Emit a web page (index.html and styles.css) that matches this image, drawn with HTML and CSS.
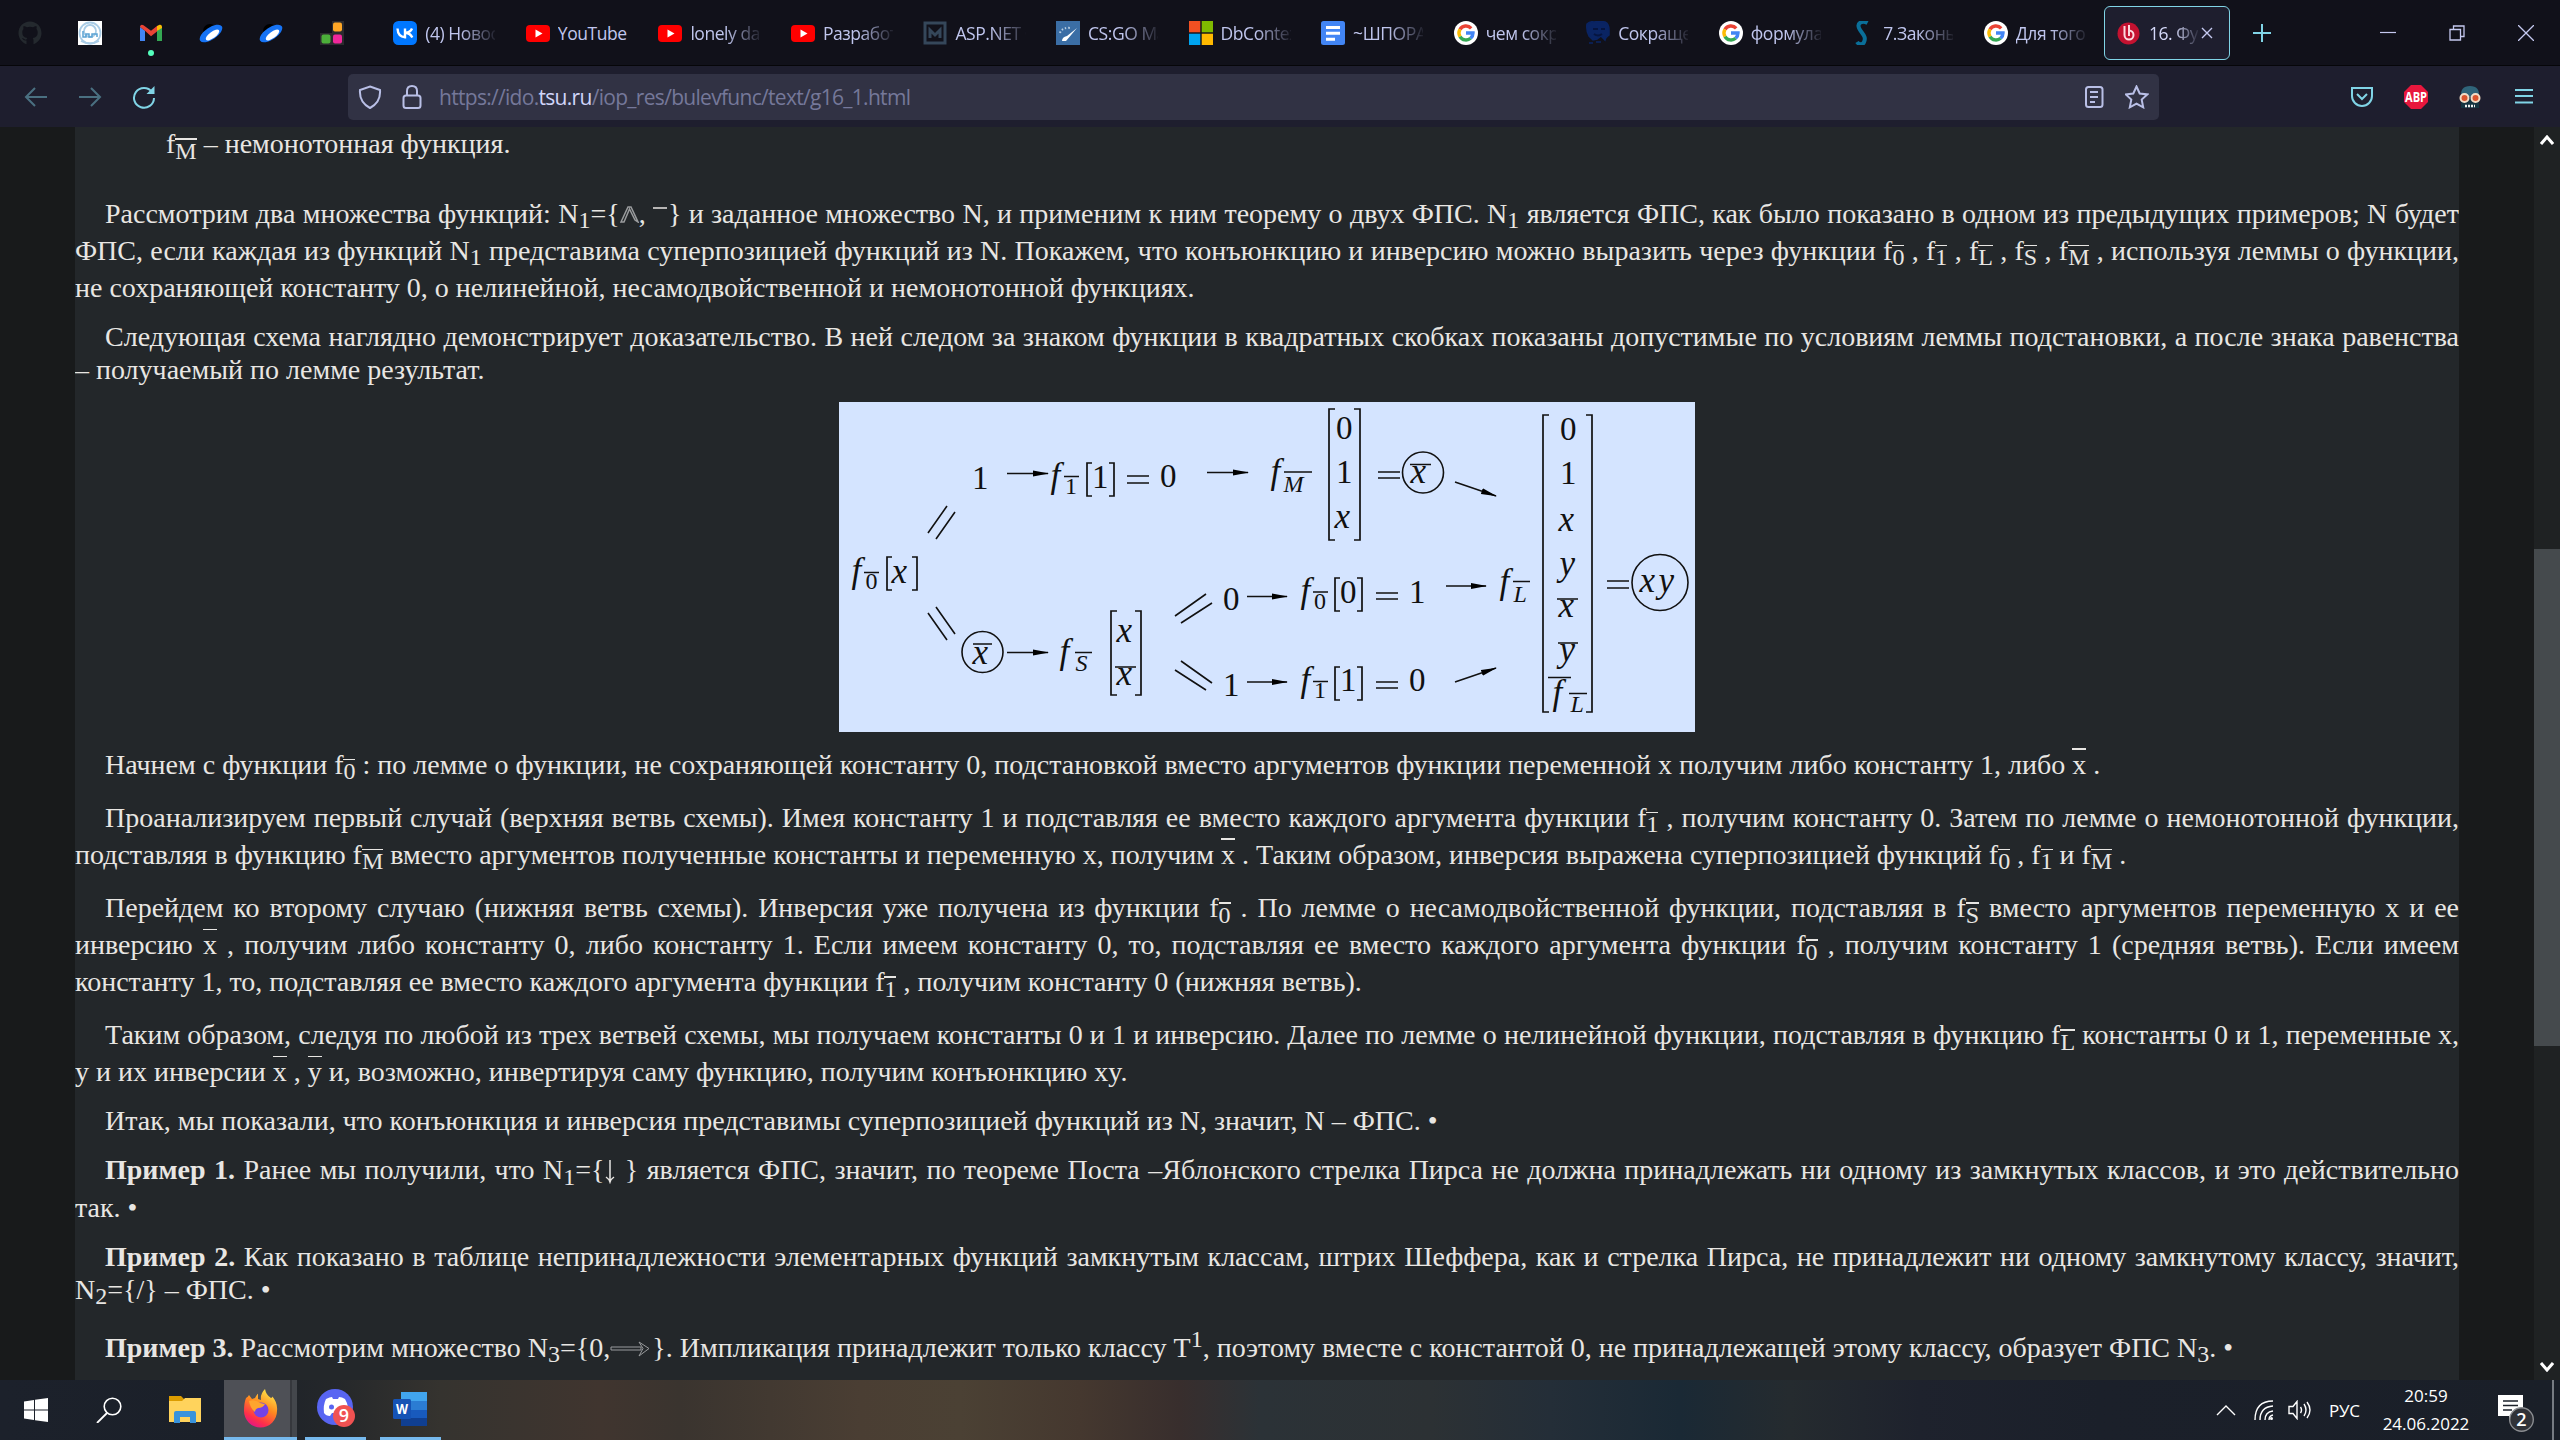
FILE: index.html
```html
<!DOCTYPE html>
<html lang="ru">
<head>
<meta charset="utf-8">
<title>16. Функционально полные системы</title>
<link rel="stylesheet" href="styles.css">
</head>
<body>
<svg class="defs" width="0" height="0">
  <symbol id="yt" viewBox="0 0 24 24"><rect y="4" width="24" height="17" rx="4" fill="#f00"/><path d="M9.5 8.5v8l7-4z" fill="#fff"/></symbol>
  <symbol id="google" viewBox="0 0 24 24"><circle cx="12" cy="12" r="12" fill="#fff"/><g fill="none" stroke-width="3.4"><path d="M17.2 7.3A7 7 0 0 0 6 8.4" stroke="#ea4335"/><path d="M6 8.4a7 7 0 0 0 0 7.2" stroke="#fbbc05"/><path d="M6 15.6a7 7 0 0 0 10.6 1.7" stroke="#34a853"/><path d="M16.6 17.3A7 7 0 0 0 19 12H12" stroke="#4285f4"/></g></symbol>
  <symbol id="saucer" viewBox="0 0 24 24"><circle cx="11" cy="10" r="7" fill="#000"/><ellipse cx="12" cy="12.5" rx="13" ry="6" transform="rotate(-34 12 12.5)" fill="#1673f5"/><ellipse cx="13.5" cy="14" rx="8" ry="3.2" transform="rotate(-36 13.5 14)" fill="#fff"/></symbol>
</svg>

<header class="tabs">
  <div class="pin"><svg viewBox="0 0 24 24"><path d="M12 .5C5.500.5.5 5.600.5 12c0 5.200 3.300 9.600 8 11.200V19.500c-3 .6-3.900-1.500-4.500-2.400 2 .2 2 2 4.500 1.500.1-.8.400-1.300.8-1.700-3.500-.4-5-2.200-5-5.500 0-1.300.4-2.500 1.200-3.300-.3-1-.2-2 .1-3 1.400.1 2.400.6 3.300 1.200a11.500 11.500 0 0 1 6.200 0c.9-.6 1.900-1.100 3.300-1.200.3 1 .4 2 .1 3 .8.800 1.200 2 1.200 3.300 0 3.300-1.500 5.100-5 5.500.5.500.8 1.300.8 2.500v3.800c4.700-1.600 8-6 8-11.200C23.500 5.600 18.500.5 12 .5z" fill="#24292e"/></svg></div>
  <div class="pin"><svg viewBox="0 0 24 24"><path d="M0 0h24v24H0z" fill="#fff"/><g fill="none" stroke="#a9cce6" stroke-width="1.800"><circle cx="12" cy="12" r="10.500"/><circle cx="12" cy="10" r="6"/><path d="M3 20q9 5 18 0" /></g><path d="M5 10v6h3v-3h3v3h3v-3h5v3" fill="none" stroke="#5ba3d4" stroke-width="1.500"/></svg></div>
  <div class="pin unread"><svg viewBox="0 0 24 24"><path d="M1 20V6l5 3.800V20z" fill="#4285f4"/><path d="M18 20V9.800L23 6v14z" fill="#34a853"/><path d="M18 10V5l2-1c2-1 3 .5 3 2v1z" fill="#fbbc04"/><path d="M6 9.800 1 6c0-2 1.700-3 3.500-1.800L12 9.800 18 5v5.500l-6 4.800z" fill="#ea4335"/></svg></div>
  <div class="pin"><svg viewBox="0 0 24 24"><use href="#saucer"/></svg></div>
  <div class="pin"><svg viewBox="0 0 24 24"><use href="#saucer"/></svg></div>
  <div class="pin"><svg viewBox="0 0 24 24"><path d="M12 0h12v24H0V12h12z" fill="#2b2b2e"/><rect x="13" y="1.500" width="9" height="9" rx="2" fill="#ffa726"/><rect x="1.500" y="13.500" width="9" height="9" rx="2" fill="#4caf3a"/><rect x="13" y="13.500" width="9" height="9" rx="2" fill="#f0279b"/></svg></div>
  <div class="tab first"><svg viewBox="0 0 24 24"><rect width="24" height="24" rx="5.500" fill="#07f"/><path d="M4.500 7.500c.3 5.500 3 8.500 7.500 8.700V7.500M19 7.500c-1 2.500-3.500 4-6.500 4.300 3 .3 5.500 2 6.800 4.700" fill="none" stroke="#fff" stroke-width="2.400"/></svg><span>(4) Новости</span></div>
  <div class="tab"><svg viewBox="0 0 24 24"><use href="#yt"/></svg><span>YouTube</span></div>
  <div class="tab"><svg viewBox="0 0 24 24"><use href="#yt"/></svg><span>lonely day</span></div>
  <div class="tab"><svg viewBox="0 0 24 24"><use href="#yt"/></svg><span>Разработка</span></div>
  <div class="tab"><svg viewBox="0 0 24 24"><path d="M2 2h20v20H2zM7 17V9l5 5 5-5v8" fill="none" stroke="#35475a" stroke-width="3"/></svg><span>ASP.NET C</span></div>
  <div class="tab"><svg viewBox="0 0 24 24"><path d="M0 0h24v24H0z" fill="#3b6ea5"/><path d="M21 7 10 20H6q0-4 5-5z" fill="#fff"/><path d="M4 12q2-6 11-5" fill="none" stroke="#b8cde2" stroke-dasharray="1.500 2" stroke-width="2"/></svg><span>CS:GO Ma</span></div>
  <div class="tab"><svg viewBox="0 0 24 24"><path d="M0 0h11.300v11.300H0z" fill="#f25022"/><path d="M12.700 0H24v11.300H12.700z" fill="#7fba00"/><path d="M0 12.700h11.300V24H0z" fill="#00a4ef"/><path d="M12.700 12.700H24V24H12.700z" fill="#ffb900"/></svg><span>DbContext</span></div>
  <div class="tab"><svg viewBox="0 0 24 24"><rect width="24" height="24" rx="2.500" fill="#4285f4"/><path d="M5 6.500h14M5 12.300h14M5 18.200h9" stroke="#fff" stroke-width="3"/></svg><span>~ШПОРА</span></div>
  <div class="tab"><svg viewBox="0 0 24 24"><use href="#google"/></svg><span>чем сокра</span></div>
  <div class="tab"><svg viewBox="0 0 24 24"><path d="M1 3q3-3 7-2 6-1 11 0 4 2 4 8v5q-3 2-4 5l-4-4-4 3-4 1-4-4Q0 9 1 3zM3 22h4M10 21h5" fill="#0a2463" stroke="#0a2463" stroke-width="1.500"/><path d="M7 8h5m3 0h4M8 13q4 3 8 0" stroke="#061540" fill="none" stroke-width="2"/></svg><span>Сокращен</span></div>
  <div class="tab"><svg viewBox="0 0 24 24"><use href="#google"/></svg><span>формула</span></div>
  <div class="tab"><svg viewBox="0 0 24 24"><path d="M16.500 2C11-1 6 2 8 7s8 8 5 14c-1 3-5 3-7 0" fill="none" stroke="#0a6f99" stroke-width="4"/></svg><span>7.Законы</span></div>
  <div class="tab"><svg viewBox="0 0 24 24"><use href="#google"/></svg><span>Для того ч</span></div>
  <div class="tab active"><svg viewBox="0 0 24 24"><circle cx="11.500" cy="12.500" r="11" fill="#c41230"/><path d="M7.500 5v9a4.500 4.500 0 1 0 4.500-4.500M12 4v11" fill="none" stroke="#fbd9de" stroke-width="2"/></svg><span>16. Функ</span><svg class="x" viewBox="0 0 12 12"><path d="m1 1 10 10M11 1 1 11" stroke="#c5c9f0" stroke-width="1.400"/></svg></div>
  <svg class="plus" viewBox="0 0 18 18"><path d="M9 0v18M0 9h18" stroke="#80d4e6" stroke-width="2"/></svg>
  <div class="win">
    <svg viewBox="0 0 16 16"><path d="M0 7.500h16" stroke="#c5c9f0" stroke-width="1.200"/></svg>
    <svg viewBox="0 0 16 16"><path d="M1 4.500h10.500V15H1zM4.500 4.500V1H15v10.500h-3.500" fill="none" stroke="#c5c9f0" stroke-width="1.300"/></svg>
    <svg viewBox="0 0 16 16"><path d="m0 0 16 16M16 0 0 16" stroke="#c5c9f0" stroke-width="1.300"/></svg>
  </div>
</header>

<nav class="bar">
  <div class="hist">
    <svg class="dim" viewBox="0 0 24 24"><path d="M23 12H2M11 3l-9 9 9 9"/></svg>
    <svg class="dim" viewBox="0 0 24 24"><path d="M1 12h21M13 3l9 9-9 9"/></svg>
    <svg viewBox="0 0 24 24"><path d="M20 7a10 9.800 0 1 0 2 6"/><path d="M22.500 1v8h-8z" fill="#80d4e6" stroke="none"/></svg>
  </div>
  <div class="url">
    <svg viewBox="0 0 24 24"><path d="M12 1.500 22 5q1 12-10 18Q1 17 2 5z"/></svg>
    <svg viewBox="0 0 24 24"><rect x="3.500" y="10.500" width="17" height="12.500" rx="2.500"/><path d="M7 10V6q0-5 5-5t5 5v4"/></svg>
    <span class="addr">https://ido.<b>tsu.ru</b>/iop_res/bulevfunc/text/g16_1.html</span>
    <svg viewBox="0 0 24 24"><rect x="3" y="2" width="16.500" height="20" rx="2.500"/><path d="M7 7h8M7 12h8M7 17h5"/></svg>
    <svg viewBox="0 0 24 24"><path d="m11.500 1.500 3.200 7 7.600.9-5.600 5.200 1.500 7.700-6.700-3.700-6.700 3.700 1.500-7.700L.7 9.400l7.600-.9z"/></svg>
  </div>
  <div class="ext">
    <svg viewBox="0 0 24 24"><path d="M2 3h20v8a10 10 0 0 1-20 0zM7 9l5 5 5-5" fill="none" stroke="#80d4e6" stroke-width="2"/></svg>
    <svg viewBox="0 0 24 24"><path d="M7 0h10l7 7v10l-7 7H7l-7-7V7z" fill="#e8173d"/><text x="12" y="17" text-anchor="middle" textLength="22" lengthAdjust="spacingAndGlyphs">ABP</text></svg>
    <svg viewBox="0 0 24 24"><path d="M3 12Q2 1 12 1t9 11z" fill="#2f6479"/><path d="M3 14h18v9H3z" fill="#153441"/><circle cx="6.500" cy="13" r="4" fill="#d9552f" stroke="#f2dcc6" stroke-width="2"/><circle cx="17.500" cy="13" r="4" fill="#d9552f" stroke="#f2dcc6" stroke-width="2"/><path d="M7 21h10" stroke="#eee" stroke-width="2.500" stroke-dasharray="2 1"/></svg>
    <svg viewBox="0 0 24 24"><path d="M3 5h18M3 11h18M3 17.500h18" stroke="#80d4e6" stroke-width="2"/></svg>
  </div>
</nav>

<main class="view">
  <article class="doc">
    <p class="def"><span class="t">f<sub class="o">M</sub> – немонотонная функция.</span></p>
    <p><span class="t j i">Рассмотрим два множества функций: N<sub>1</sub>={<svg class="and" viewBox="0 0 19 17"><path d="M1 16 8 1h3l7 15-3-2-5.500-11L4 16z"/></svg>, <svg class="not" viewBox="0 0 15 17"><path d="M0 2h14"/></svg>} и заданное множество N, и применим к ним теорему о двух ФПС. N<sub>1</sub> является ФПС, как было показано в одном из предыдущих примеров; N будет</span>
    <span class="t j">ФПС, если каждая из функций N<sub>1</sub> представима суперпозицией функций из N. Покажем, что конъюнкцию и инверсию можно выразить через функции f<sub class="o">0</sub> , f<sub class="o">1</sub> , f<sub class="o">L</sub> , f<sub class="o">S</sub> , f<sub class="o">M</sub> , используя леммы о функции,</span>
    <span>не сохраняющей константу 0, о нелинейной, несамодвойственной и немонотонной функциях.</span></p>
    <p><span class="j i">Следующая схема наглядно демонстрирует доказательство. В ней следом за знаком функции в квадратных скобках показаны допустимые по условиям леммы подстановки, а после знака равенства</span>
    <span>– получаемый по лемме результат.</span></p>

    <svg class="scheme" viewBox="0 0 856 330">
      <defs><marker id="a" markerWidth="17" markerHeight="7" refX="15" refY="3.500" orient="auto" markerUnits="userSpaceOnUse"><path d="M0 .5 16 3.500 0 6.500z"/></marker></defs>
      <g class="ln">
        <path d="m89 131 19-27M97 137l19-27M89 211l19 27M97 205l19 27M336 214l31-22M342 221l31-20M336 268l31 20M342 259l31 22"/>
        <g marker-end="url(#a)">
          <path d="M168 71.500h41"/><path d="M368 70.500h41"/><path d="M168 250.500h41"/><path d="M408 194.500h40"/><path d="M408 280h40"/><path d="M607 184h40"/><path d="m616 80 41 14"/><path d="m616 280 41-14"/>
        </g>
        <circle cx="143.500" cy="250" r="20.500"/><circle cx="584" cy="70.500" r="20.500"/><circle cx="821" cy="180.500" r="28"/>
      </g>
      <g class="br">
        <path d="M53 155h-5v33h5M73 155h5v33h-5M253 61h-5v33h5M270 61h5v33h-5M278 209h-6v84h6M296 209h6v84h-6M496 7h-6v131h6M515 7h6v131h-6M501 176h-5v33h5M518 176h5v33h-5M501 265h-5v33h5M518 265h5v33h-5M710 13h-6v297h6M747 13h6v297h-6"/>
        <path d="M25 170.500h15M225 74.500h15M236 250.500h17M134 242h19M276 265h21M445 70h28M571 62.500h21M474 190h15M474 279.500h15M674 179.500h17M718 197h21M719 241h20M709 275.500h23M730 291.500h18"/>
        <path d="M288 74h22M288 81h22M539 70h22M539 76h22M537 191h22M537 197h22M537 280h22M537 286h22M768 179h22M768 186h22"/>
      </g>
      <g class="it" transform="translate(-1.500 1)">
        <text x="14" y="179">f</text><text x="54" y="180">x</text><text x="213" y="84">f</text><text x="135" y="261">x</text><text x="222" y="260">f</text><text x="279" y="239">x</text><text x="279" y="282">x</text>
        <text x="433" y="80">f</text><text x="497" y="125">x</text><text x="573" y="80">x</text><text x="463" y="199">f</text><text x="463" y="288">f</text><text x="662" y="190">f</text>
        <text x="721" y="128">x</text><text x="722" y="172">y</text><text x="721" y="214">x</text><text x="722" y="258">y</text><text x="715" y="301">f</text><text x="802" y="189">x</text><text x="821" y="189">y</text>
        <g class="s"><text x="238" y="268">S</text><text x="446" y="89">M</text><text x="676" y="199">L</text><text x="733" y="309">L</text></g>
      </g>
      <g class="up">
        <text x="133" y="87">1</text><text x="253" y="86">1</text><text x="321" y="85">0</text><text x="384" y="208">0</text><text x="384" y="294">1</text>
        <text x="497" y="37">0</text><text x="497" y="81">1</text><text x="501" y="201">0</text><text x="570" y="201">1</text><text x="501" y="289">1</text><text x="570" y="289">0</text><text x="721" y="38">0</text><text x="721" y="82">1</text>
        <g class="s"><text x="26.500" y="187">0</text><text x="226" y="92">1</text><text x="475" y="207">0</text><text x="475" y="296">1</text></g>
      </g>
    </svg>

    <p><span class="t i">Начнем с функции f<sub class="o">0</sub> : по лемме о функции, не сохраняющей константу 0, подстановкой вместо аргументов функции переменной x получим либо константу 1, либо <i class="o">x</i> .</span></p>
    <p><span class="t j i">Проанализируем первый случай (верхняя ветвь схемы). Имея константу 1 и подставляя ее вместо каждого аргумента функции f<sub class="o">1</sub> , получим константу 0. Затем по лемме о немонотонной функции,</span>
    <span class="t">подставляя в функцию f<sub class="o">M</sub> вместо аргументов полученные константы и переменную x, получим <i class="o">x</i> . Таким образом, инверсия выражена суперпозицией функций f<sub class="o">0</sub> , f<sub class="o">1</sub> и f<sub class="o">M</sub> .</span></p>
    <p><span class="t j i">Перейдем ко второму случаю (нижняя ветвь схемы). Инверсия уже получена из функции f<sub class="o">0</sub> . По лемме о несамодвойственной функции, подставляя в f<sub class="o">S</sub> вместо аргументов переменную x и ее</span>
    <span class="t j">инверсию <i class="o">x</i> , получим либо константу 0, либо константу 1. Если имеем константу 0, то, подставляя ее вместо каждого аргумента функции f<sub class="o">0</sub> , получим константу 1 (средняя ветвь). Если имеем</span>
    <span class="t">константу 1, то, подставляя ее вместо каждого аргумента функции f<sub class="o">1</sub> , получим константу 0 (нижняя ветвь).</span></p>
    <p><span class="t j i">Таким образом, следуя по любой из трех ветвей схемы, мы получаем константы 0 и 1 и инверсию. Далее по лемме о нелинейной функции, подставляя в функцию f<sub class="o">L</sub> константы 0 и 1, переменные x,</span>
    <span>y и их инверсии <i class="o">x</i> , <i class="o">y</i> и, возможно, инвертируя саму функцию, получим конъюнкцию xy.</span></p>
    <p><span class="i">Итак, мы показали, что конъюнкция и инверсия представимы суперпозицией функций из N, значит, N – ФПС. •</span></p>
    <p><span class="t j i"><b>Пример 1.</b> Ранее мы получили, что N<sub>1</sub>={<svg class="down" viewBox="0 0 12 24"><path d="M6 0v21M2 17q3 2 4 5 1-3 4-5"/></svg> } является ФПС, значит, по теореме Поста –Яблонского стрелка Пирса не должна принадлежать ни одному из замкнутых классов, и это действительно</span>
    <span>так. •</span></p>
    <p><span class="j i"><b>Пример 2.</b> Как показано в таблице непринадлежности элементарных функций замкнутым классам, штрих Шеффера, как и стрелка Пирса, не принадлежит ни одному замкнутому классу, значит,</span>
    <span class="t">N<sub>2</sub>={/} – ФПС. •</span></p>
    <p class="last"><span class="t i"><b>Пример 3.</b> Рассмотрим множество N<sub>3</sub>={0,<svg class="imp" viewBox="0 0 42 16"><path d="M1 6h30v3H1z"/><path d="m29 1 10 6.500L29 15l4-7.500z"/></svg>}. Импликация принадлежит только классу T<sup>1</sup>, поэтому вместе с константой 0, не принадлежащей этому классу, образует ФПС N<sub>3</sub>. •</span></p>
  </article>
  <div class="scroll"><svg viewBox="0 0 14 10"><path d="m1 9 6-7 6 7"/></svg><div class="thumb"></div><svg viewBox="0 0 14 10"><path d="m1 1 6 7 6-7"/></svg></div>
</main>

<footer class="task">
  <div class="cell start"><svg width="24" height="24" viewBox="0 0 24 24"><path d="M0 3.500 10 2v9.500H0zM11 1.800 24 0v11.500H11zM0 12.500h10V22L0 20.500zM11 12.500h13V24l-13-1.800z" fill="#fff"/></svg></div>
  <div class="cell find"><svg width="26" height="26" viewBox="0 0 26 26"><circle cx="16.500" cy="9.500" r="8.300" fill="none" stroke="#fff" stroke-width="1.600"/><path d="M11 16 1 26" stroke="#fff" stroke-width="1.800"/></svg></div>
  <div class="cell"><svg width="32" height="28" viewBox="0 0 32 28"><path d="M0 0h12l3 3v4H0z" fill="#dc9c00"/><path d="M0 5h13l3-3h16v24H0z" fill="#ffd35c"/><path d="M5 27V17q0-2 2-2h18q2 0 2 2v10h-6v-6H11v6z" fill="#3a93dc"/></svg></div>
  <div class="cell run ff"><svg width="36" height="40" viewBox="0 0 36 40"><defs><linearGradient id="f" x1=".8" y1="0" x2=".3" y2="1"><stop offset="0" stop-color="#fff14f"/><stop offset=".45" stop-color="#ff8a1f"/><stop offset=".8" stop-color="#ff2f4a"/><stop offset="1" stop-color="#e31587"/></linearGradient></defs><path d="M3 9q2-1 3-3l3 4 3-1q3-5 3-4v5l3 1q-1-6 4-11 1 6 6 9 2-1 1-2 6 7 5 15a16.500 16.500 0 0 1-33 0Q1 14 3 9z" fill="url(#f)"/><circle cx="18" cy="21" r="7.500" fill="#7542e5"/><path d="M6 12q6-2 11 2l5 1q-2 4-7 4-3 1-3 4-5-4-6-11z" fill="#ffa52e"/></svg></div>
  <div class="cell run dc"><svg width="38" height="44" viewBox="0 0 38 44"><circle cx="18" cy="20" r="18" fill="#5865f2"/><path d="M9 12q4-2 6-2l1 2h5l1-2q3 0 6 2 4 7 3 14-3 3-6 3l-2-3h-8l-2 3q-4 0-6-3-1-8 2-14z" fill="#fff"/><circle cx="14.500" cy="20" r="2.500" fill="#5865f2"/><circle cx="27" cy="29" r="11" fill="#f05252"/><text x="27" y="35" text-anchor="middle">9</text></svg></div>
  <div class="cell run wd"><svg width="36" height="38" viewBox="0 0 36 38"><path d="M8 2h26v10H8z" fill="#41a5ee"/><path d="M8 11h26v9H8z" fill="#2b7cd3"/><path d="M8 20h26v8H8z" fill="#185abd"/><path d="M8 28h26v8H8z" fill="#103f91"/><rect y="9" width="18" height="20" rx="1.500" fill="#1553b5"/><text x="9" y="24" text-anchor="middle" textLength="12" lengthAdjust="spacingAndGlyphs">W</text></svg></div>
  <div class="tray">
    <svg width="20" height="12" viewBox="0 0 20 12"><path d="m1 11 9-9 9 9"/></svg>
    <svg class="wifi" width="20" height="22" viewBox="0 0 20 22"><path d="M1 21Q1 2 19 2M6 21Q6 8 19 7M11 21q0-8 8-9M15 21q0-4 4-5"/><circle cx="17.500" cy="19.500" r="1.500" fill="#fff" stroke="none"/></svg>
    <svg width="23" height="20" viewBox="0 0 23 20"><path d="M1 6.500h4l4-5v17l-4-5H1zM12.500 7q2 3 0 6M16 4q4 6 0 12M19 2q6 8 0 16"/></svg>
    <span class="lang">РУС</span>
    <div class="clock"><span>20:59</span><span>24.06.2022</span></div>
    <svg class="note" width="38" height="38" viewBox="0 0 38 38"><path d="M1 1h25v21H16l-4 5v-5H1z" fill="#fff"/><path d="M6 7h15M6 11.500h15M6 16h9" stroke="#1d222b" stroke-width="1.500"/><circle cx="24.500" cy="25.500" r="11.800" fill="#303238" stroke="#8b8d91"/><text x="24.500" y="32" text-anchor="middle">2</text></svg>
  </div>
</footer>
</body>
</html>
```
FILE: styles.css
```css
* { box-sizing: border-box; }
body {
  margin: 0;
  width: 2560px;
  height: 1440px;
  overflow: hidden;
  display: flex;
  flex-direction: column;
  background: #11111b;
  font-family: "Open Sans", "Noto Sans", sans-serif;
}
.defs { position: absolute; }

/* Tab strip */
.tabs {
  height: 66px;
  flex: none;
  display: flex;
  align-items: center;
  background: #11111a;
  border-bottom: 1px solid #060609;
  color: #c0c6ee;
  font-size: 17.5px;
}
.pin { width: 60.3px; display: flex; justify-content: center; position: relative; }
.pin svg, .tab svg { width: 24px; height: 24px; flex: none; }
.unread::after {
  content: "";
  position: absolute;
  left: 27px;
  top: 29px;
  width: 6px;
  height: 6px;
  border-radius: 50%;
  background: #54ffbd;
}
.tab {
  width: 132.55px;
  height: 54px;
  flex: none;
  padding: 0 18px 0 12.5px;
  display: flex;
  align-items: center;
  gap: 8px;
}
.tab.first { margin-left: 19px; }
.tab span {
  flex: 1;
  min-width: 0;
  overflow: hidden;
  white-space: nowrap;
  letter-spacing: -.45px;
  mask-image: linear-gradient(90deg, #000 50%, transparent 105%);
}
.tab:nth-child(8) span { mask-image: none; }
.tab.active {
  width: 126px;
  padding: 0 16px 0 12px;
  border: 1.500px solid #80d4e6;
  border-radius: 6px;
  background: #1e1e2e;
  color: #d5d9fa;
}
.tab.active span { margin-right: -5px; }
.tab.active .x { width: 12px; height: 14px; }
.plus { width: 18px; height: 18px; margin-left: 23px; }
.win { margin-left: auto; padding-right: 26px; display: flex; gap: 53px; }
.win svg { width: 16px; height: 16px; }

/* Toolbar */
.bar {
  height: 61px;
  flex: none;
  display: flex;
  align-items: center;
  background: #1e1e2e;
}
.hist { width: 348px; padding-left: 24px; display: flex; gap: 30px; }
.hist svg { width: 24px; height: 24px; fill: none; stroke: #80d4e6; stroke-width: 2; }
.hist .dim { opacity: .45; }
.url {
  width: 1811px;
  height: 46px;
  padding: 0 10px;
  display: flex;
  align-items: center;
  gap: 18px;
  border-radius: 5px;
  background: #313244;
}
.url svg { width: 24px; height: 24px; fill: none; stroke: #b9bfe6; stroke-width: 2; }
.addr { flex: 1; margin-left: -3px; color: #75789a; font-size: 21px; letter-spacing: -.7px; }
.addr b { font-weight: 400; color: #d0d5fa; }
.ext { flex: 1; padding-right: 24px; display: flex; justify-content: flex-end; gap: 30px; }
.ext svg { width: 24px; height: 24px; }
.ext text { fill: #fff; font: bold 14px "Open Sans", sans-serif; }

/* Page */
.view { flex: 1; min-height: 0; display: flex; background: #181a1b; }
.doc {
  width: 2384px;
  margin-left: 75px;
  overflow: hidden;
  background: #23272a;
  color: #e8e6e3;
  font: 28px/33px "Liberation Serif", "Times New Roman", serif;
}
.doc p { margin: 0 0 16px; }
.doc p > span { display: block; height: 33px; white-space: nowrap; }
.doc p > .t { height: 37.1px; }
.doc .j { text-align-last: justify; }
.doc .i { padding-left: 30px; }
.doc p.def { margin: 0 0 32.500px 91px; }
.doc p.last { margin-top: 21px; }
.doc sub, .doc sup { font-size: 24px; line-height: 0; vertical-align: baseline; position: relative; }
.doc sub { top: 5.500px; }
.doc sup { top: -10px; }
.doc i { font-style: normal; position: relative; }
.o::before {
  content: "";
  position: absolute;
  left: 0;
  right: 0;
  bottom: 24px;
  height: 1.500px;
  background: #e8e6e3;
}
i.o::before { bottom: 30px; }
.and, .not, .down, .imp { fill: none; stroke: #e8e6e3; stroke-width: 1.500; }
.and { width: 19px; height: 17px; stroke: #9a9c9e; }
.not { width: 15px; height: 17px; }
.down { width: 12px; height: 24px; vertical-align: -5px; }
.imp { width: 42px; height: 16px; stroke: #9a9c9e; stroke-width: 1; }

/* Substitution scheme */
.scheme { display: block; width: 856px; height: 330px; margin: 7px 0 16px 764px; background: #d4e4ff; }
.ln { fill: none; stroke: #111; stroke-width: 1.600; }
.br { fill: none; stroke: #111; stroke-width: 1.700; }
.it, .up { fill: #111; font-size: 35px; }
.up { font-size: 33px; }
.it { font-style: italic; }
.scheme .s { font-size: 24px; }

.scroll {
  width: 26px;
  margin-left: auto;
  padding: 8px 0;
  display: flex;
  flex-direction: column;
  align-items: center;
  background: #1f2223;
}
.scroll svg { width: 14px; height: 10px; flex: none; fill: none; stroke: #fff; stroke-width: 3; }
.thumb { width: 26px; height: 497px; margin: 404px 0 auto; background: #454a4d; }

/* Taskbar */
.task {
  height: 60px;
  flex: none;
  display: flex;
  background: linear-gradient(90deg, #1c212b 0, #1b2029 230px, #24272a 330px, #35332f 440px, #40352f 600px, #3a342f 680px, #4a3e33 860px, #4b4134 960px, #45382f 1080px, #382e2d 1180px, #2b3237 1260px, #2c3134 1430px, #242e38 1550px, #1a2935 1680px, #252b2f 1790px, #1e222d 1920px, #1b202a 2100px, #1a1f28 100%);
  color: #fff;
}
.cell { width: 71px; display: flex; align-items: center; justify-content: center; }
.start { width: 72px; }
.find { width: 73px; }
.cell.run { width: 73px; border-bottom: 3px solid #76b9ed; }
.cell:nth-child(3) { width: 79px; padding-right: 0; }
.cell.ff { background: linear-gradient(90deg, #4e5056 66px, #36383d 66px, #36383d 68px, #44474c 68px); }
.cell.dc { width: 61px; margin: 0 14px 0 8px; }
.cell.wd { width: 61px; }
.task text { fill: #fff; font: 600 18px "Open Sans", sans-serif; }
.task .wd text { font: bold 14px "Open Sans", sans-serif; }
.tray { margin-left: auto; display: flex; align-items: center; border-right: 2px solid #777b82; margin-right: 6px; }
.tray > svg { fill: none; stroke: #fff; stroke-width: 1.400; margin-right: 18px; }
.tray > .wifi { margin-right: 14px; }
.tray .note { margin: 6px 17px 0 0; stroke: none; }
.lang { width: 32px; font-size: 17px; letter-spacing: -.3px; margin-right: 16px; }
.clock { width: 98px; margin-right: 22px; display: flex; flex-direction: column; align-items: center; font-size: 17px; line-height: 28px; }
```
